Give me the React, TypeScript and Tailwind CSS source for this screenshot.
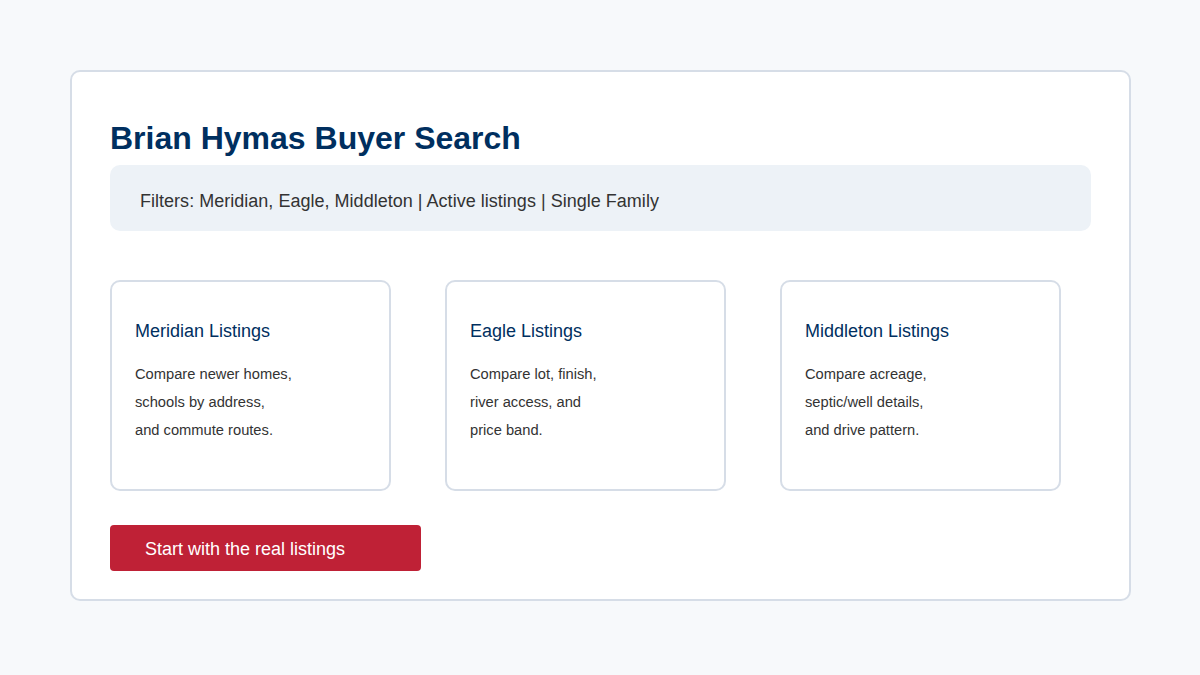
const listings = [
  { title: 'Meridian Listings', lines: ['Compare newer homes,', 'schools by address,', 'and commute routes.'] },
  { title: 'Eagle Listings', lines: ['Compare lot, finish,', 'river access, and', 'price band.'] },
  { title: 'Middleton Listings', lines: ['Compare acreage,', 'septic/well details,', 'and drive pattern.'] },
];

export default function App() {
  return (
    <div className="h-[675px] w-[1200px] overflow-hidden bg-[#f7f9fb] pl-[70px] pt-[70px] font-['Liberation_Sans',Arial,sans-serif]">
      <div className="h-[531px] w-[1061px] rounded-[10px] border-2 border-[#d6dde7] bg-white px-[38px] pt-[48px]">
        <h1 className="h-[37px] text-[32px] font-bold leading-[37px] text-[#002f5f]">Brian Hymas Buyer Search</h1>

        {/* Filters */}
        <div className="mt-[8px] h-[66px] rounded-[10px] bg-[#edf2f7] pl-[30px] pt-[3px] text-[18px] leading-[66px] tracking-[0.02px] text-[#333333]">
          Filters: Meridian, Eagle, Middleton | Active listings | Single Family
        </div>

        {/* Listing cards */}
        <div className="mt-[49px] flex gap-[54px]">
          {listings.map((item) => (
            <div key={item.title} className="h-[211px] w-[281px] rounded-[10px] border-2 border-[#d6dde7] px-[23px] pt-[39px]">
              <h2 className="text-[18px] leading-[20px] text-[#002f5f]">{item.title}</h2>
              <div className="mt-[19px] text-[14.7px] leading-[28px] text-[#333333]">
                {item.lines.map((line) => (
                  <p key={line}>{line}</p>
                ))}
              </div>
            </div>
          ))}
        </div>

        <button className="mt-[34px] h-[46px] w-[311px] rounded-[4px] bg-[#bf2136] pl-[35px] pt-[2px] text-left text-[18px] text-white">
          Start with the real listings
        </button>
      </div>
    </div>
  );
}
